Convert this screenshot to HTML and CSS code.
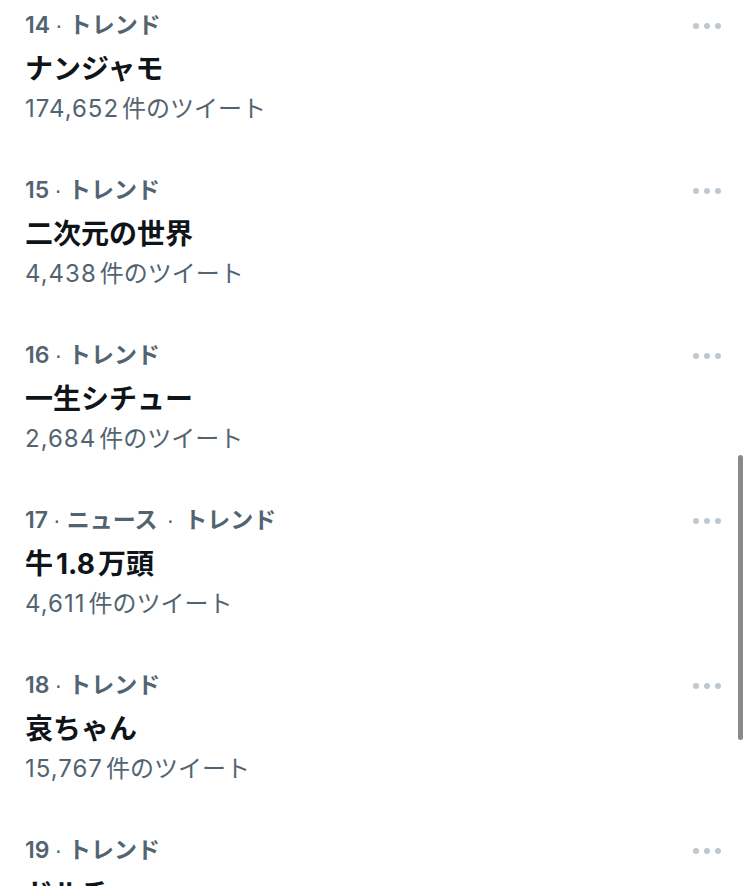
FILE: index.html
```html
<!DOCTYPE html>
<html lang="ja">
<head>
<meta charset="utf-8">
<title>トレンド</title>
<link rel="stylesheet" href="styles.css">
</head>
<body>
<div class="list">
  <div class="item">
    <div class="info">
      <div class="meta"><span class="num">14</span><span class="sep">·</span>トレンド</div>
      <div class="title">ナンジャモ</div>
      <div class="count"><span class="num">174,652</span>件のツイート</div>
    </div>
    <button class="more" aria-label="その他"><svg width="28" height="6" viewBox="0 0 28 6"><circle cx="3" cy="3" r="3"/><circle cx="14" cy="3" r="3"/><circle cx="25" cy="3" r="3"/></svg></button>
  </div>
  <div class="item">
    <div class="info">
      <div class="meta"><span class="num">15</span><span class="sep">·</span>トレンド</div>
      <div class="title">二次元の世界</div>
      <div class="count"><span class="num">4,438</span>件のツイート</div>
    </div>
    <button class="more" aria-label="その他"><svg width="28" height="6" viewBox="0 0 28 6"><circle cx="3" cy="3" r="3"/><circle cx="14" cy="3" r="3"/><circle cx="25" cy="3" r="3"/></svg></button>
  </div>
  <div class="item">
    <div class="info">
      <div class="meta"><span class="num">16</span><span class="sep">·</span>トレンド</div>
      <div class="title">一生シチュー</div>
      <div class="count"><span class="num">2,684</span>件のツイート</div>
    </div>
    <button class="more" aria-label="その他"><svg width="28" height="6" viewBox="0 0 28 6"><circle cx="3" cy="3" r="3"/><circle cx="14" cy="3" r="3"/><circle cx="25" cy="3" r="3"/></svg></button>
  </div>
  <div class="item">
    <div class="info">
      <div class="meta"><span class="num">17</span><span class="sep">·</span>ニュース<span class="sep wide">·</span>トレンド</div>
      <div class="title">牛<span class="num">1.8</span>万頭</div>
      <div class="count"><span class="num">4,611</span>件のツイート</div>
    </div>
    <button class="more" aria-label="その他"><svg width="28" height="6" viewBox="0 0 28 6"><circle cx="3" cy="3" r="3"/><circle cx="14" cy="3" r="3"/><circle cx="25" cy="3" r="3"/></svg></button>
  </div>
  <div class="item">
    <div class="info">
      <div class="meta"><span class="num">18</span><span class="sep">·</span>トレンド</div>
      <div class="title">哀ちゃん</div>
      <div class="count"><span class="num">15,767</span>件のツイート</div>
    </div>
    <button class="more" aria-label="その他"><svg width="28" height="6" viewBox="0 0 28 6"><circle cx="3" cy="3" r="3"/><circle cx="14" cy="3" r="3"/><circle cx="25" cy="3" r="3"/></svg></button>
  </div>
  <div class="item">
    <div class="info">
      <div class="meta"><span class="num">19</span><span class="sep">·</span>トレンド</div>
      <div class="title">ドルチェ</div>
      <div class="count"><span class="num">3,120</span>件のツイート</div>
    </div>
    <button class="more" aria-label="その他"><svg width="28" height="6" viewBox="0 0 28 6"><circle cx="3" cy="3" r="3"/><circle cx="14" cy="3" r="3"/><circle cx="25" cy="3" r="3"/></svg></button>
  </div>
</div>
<div class="scrollbar"></div>
</body>
</html>
```

FILE: styles.css
```css
html, body {
  margin: 0;
  padding: 0;
  background: #ffffff;
  overflow: hidden;
  height: 886px;
}
body {
  font-family: "Inter", "Noto Sans CJK JP", sans-serif;
  color: #0f1419;
}
.list {
  margin-top: -16px;
}
.item {
  display: flex;
  justify-content: space-between;
  align-items: flex-start;
  padding: 25px 29px 24px 25px;
  height: 116px;
}
.info {
  display: flex;
  flex-direction: column;
}
.meta {
  font-size: 23px;
  line-height: 32px;
  height: 32px;
  font-weight: 600;
  color: #536471;
  white-space: nowrap;
}
.sep {
  display: inline-block;
  margin: 0 6px 0 5px;
  font-weight: 400;
  font-family: "Liberation Sans", sans-serif;
}
.sep.wide {
  margin: 0 10px 0 9px;
}
.title {
  margin-top: 8px;
  font-size: 28px;
  line-height: 40px;
  height: 40px;
  font-weight: 700;
  white-space: nowrap;
}
.title .num {
  margin: 0 3px;
}
.count {
  margin-top: 4px;
  font-size: 24px;
  line-height: 32px;
  height: 32px;
  font-weight: 400;
  color: #536471;
  white-space: nowrap;
}
.count .num {
  letter-spacing: 1px;
  margin-right: 3px;
}
.more {
  border: 0;
  background: none;
  padding: 0;
  margin-top: 14px;
  width: 28px;
  height: 6px;
  display: flex;
}
.more svg {
  fill: #bfc8d0;
}
.scrollbar {
  position: fixed;
  left: 738px;
  top: 455px;
  width: 5px;
  height: 285px;
  border-radius: 3px;
  background: #8a8a8a;
}
```
